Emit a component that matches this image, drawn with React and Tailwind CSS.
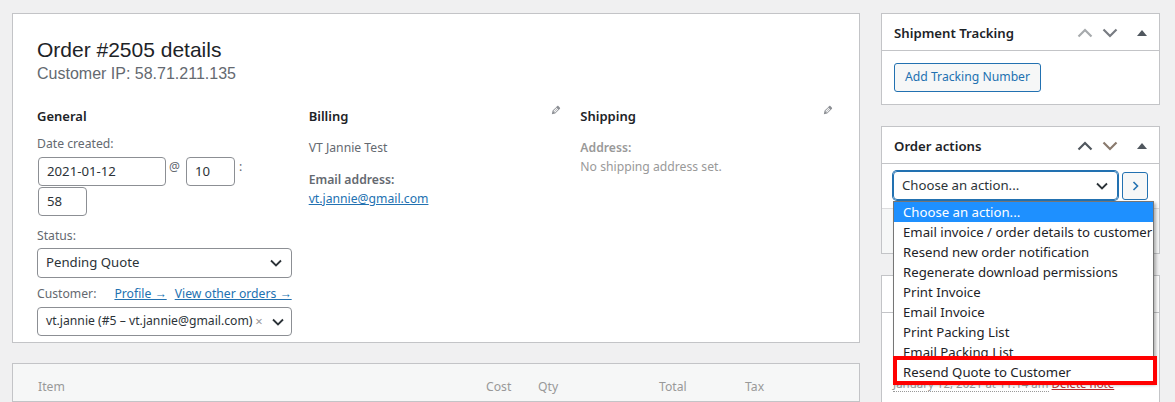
import React from "react";

const ui = { fontFamily: '"Noto Sans", "Open Sans", sans-serif' };
const arial = { fontFamily: '"Liberation Sans", Arial, sans-serif' };

const Pencil = () => (
  <svg width="12" height="12" viewBox="0 0 20 20" fill="#8c8f94">
    <path d="M13.89 3.39l2.71 2.72c.46.46.42 1.24.03 1.64l-8.01 8.02-5.56 1.16 1.16-5.58s7.6-7.63 7.99-8.03c.39-.39 1.22-.39 1.68.07zm-2.730 2.79l-5.59 5.61 1.11 1.11 5.54-5.65zm-2.97 8.23l5.58-5.6-1.07-1.08-5.59 5.6z" />
  </svg>
);

const Chevron = ({ up, color }) => (
  <svg width="16" height="10" viewBox="0 0 16 10" fill="none" stroke={color} strokeWidth="2.2">
    {up ? <path d="M1.5 8.5 8 2l6.5 6.5" /> : <path d="M1.5 1.5 8 8l6.5-6.5" />}
  </svg>
);

const Caret = () => (
  <svg width="12" height="8" viewBox="0 0 12 8" fill="none" stroke="#2c3338" strokeWidth="1.8" className="shrink-0">
    <path d="M1 1.5 6 6.5l5-5" />
  </svg>
);

const Triangle = () => (
  <svg width="10" height="6" viewBox="0 0 10 6" fill="#50575e">
    <path d="M0 6 5 0l5 6z" />
  </svg>
);

const BoxHeader = ({ title, upColor, downColor }) => (
  <div className="h-[37px] flex items-center justify-between pl-[12px] pr-[12px] border-b border-[#c3c4c7]">
    <span className="text-[13.2px] font-semibold text-[#1d2327] pt-[3px]">{title}</span>
    <div className="flex items-center gap-[9px] pt-[1px]">
      <Chevron up color={upColor} />
      <Chevron color={downColor} />
      <span className="ml-[10px] flex"><Triangle /></span>
    </div>
  </div>
);

const Input = ({ value, w }) => (
  <div className={`h-[29px] ${w} border border-[#8c8f94] rounded-[4px] bg-white px-[8px] flex items-center text-[13.2px] text-[#2c3338]`}>
    {value}
  </div>
);

const actions = [
  "Choose an action...",
  "Email invoice / order details to customer",
  "Resend new order notification",
  "Regenerate download permissions",
  "Print Invoice",
  "Email Invoice",
  "Print Packing List",
  "Email Packing List",
  "Resend Quote to Customer",
];

export default function App() {
  return (
    <div className="relative w-[1175px] h-[402px] overflow-hidden bg-[#f0f0f1] flex gap-[21px] pl-[12px] pt-[13px]" style={ui}>
      {/* left column */}
      <div className="w-[848px] flex flex-col gap-[20px] shrink-0">
        <div className="h-[330px] bg-white border border-[#c3c4c7] px-[24px] pt-[23px]">
          <h2 className="text-[21px] leading-[25px] text-[#1d2327]" style={arial}>Order #2505 details</h2>
          <p className="text-[16px] leading-[24px] text-[#646970]" style={arial}>Customer IP: 58.71.211.135</p>

          <div className="flex gap-[17px] mt-[20px]">
            {/* General */}
            <div className="w-[255px]">
              <h3 className="text-[13px] leading-[20px] font-semibold text-[#1d2327]">General</h3>
              <div className="mt-[8px] text-[12.2px] leading-[20px] text-[#646970]">Date created:</div>
              <div className="mt-[3px] flex items-start">
                <Input value="2021-01-12" w="w-[128px] ml-[1px]" />
                <span className="text-[12.2px] text-[#646970] mx-[3px] leading-[20px]">@</span>
                <Input value="10" w="w-[49px] ml-[3px]" />
                <span className="text-[12.2px] text-[#646970] ml-[4px] leading-[20px]">:</span>
              </div>
              <Input value="58" w="w-[49px] ml-[1px] mt-[1px]" />
              <div className="mt-[10px] text-[12.2px] leading-[20px] text-[#646970]">Status:</div>
              <div className="mt-[2px] h-[30px] border border-[#8c8f94] rounded-[4px] flex items-center justify-between pl-[8px] pr-[9px] text-[13.2px] text-[#2c3338]">
                <span>Pending Quote</span>
                <Caret />
              </div>
              <div className="mt-[6px] flex justify-between text-[12.2px] leading-[20px]">
                <span className="text-[#646970]">Customer:</span>
                <span className="flex gap-[8px] text-[#2271b1] underline">
                  <span>Profile →</span>
                  <span>View other orders →</span>
                </span>
              </div>
              <div className="mt-[3px] h-[29px] border border-[#8c8f94] rounded-[4px] flex items-center justify-between pl-[8px] pr-[7px] text-[12.2px] text-[#2c3338] whitespace-nowrap">
                <span>vt.jannie (#5 – vt.jannie@gmail.com)</span>
                <span className="flex items-center gap-[9px]">
                  <span className="text-[#999] text-[13px]">×</span>
                  <Caret />
                </span>
              </div>
            </div>

            {/* Billing */}
            <div className="w-[255px]">
              <div className="flex justify-between items-start">
                <h3 className="text-[13px] leading-[20px] font-semibold text-[#1d2327]">Billing</h3>
                <span className="mt-[-2px] mr-[1px]"><Pencil /></span>
              </div>
              <div className="mt-[12px] text-[12.2px] leading-[20px] text-[#646970]">VT Jannie Test</div>
              <div className="mt-[12px] text-[12.2px] leading-[20px] font-semibold text-[#646970]">Email address:</div>
              <div className="text-[12.2px] leading-[18px] text-[#2271b1] underline">vt.jannie@gmail.com</div>
            </div>

            {/* Shipping */}
            <div className="w-[255px]">
              <div className="flex justify-between items-start">
                <h3 className="text-[13px] leading-[20px] font-semibold text-[#1d2327]">Shipping</h3>
                <span className="mt-[-2px] mr-[1px]"><Pencil /></span>
              </div>
              <div className="mt-[12px] text-[12.2px] leading-[20px] font-semibold text-[#999]">Address:</div>
              <div className="text-[12.2px] leading-[18px] text-[#999]">No shipping address set.</div>
            </div>
          </div>
        </div>

        {/* Items */}
        <div className="flex-1 bg-[#f6f7f7] border border-[#c3c4c7] pl-[25px] pt-[13px] flex text-[12.2px] leading-[20px] text-[#999]">
          <span className="w-[448px]">Item</span>
          <span className="w-[52px]">Cost</span>
          <span className="w-[121px]">Qty</span>
          <span className="w-[86px]">Total</span>
          <span>Tax</span>
        </div>
      </div>

      {/* right column */}
      <div className="w-[279px] flex flex-col gap-[21px] shrink-0">
        <div className="bg-white border border-[#c3c4c7]">
          <BoxHeader title="Shipment Tracking" upColor="#a7aaad" downColor="#787c82" />
          <div className="p-[12px]">
            <div className="inline-flex h-[29px] items-center px-[10px] border border-[#2271b1] rounded-[3px] bg-[#f6f7f7] text-[12.2px] text-[#2271b1]">
              Add Tracking Number
            </div>
          </div>
        </div>

        <div className="bg-white border border-[#c3c4c7]">
          <BoxHeader title="Order actions" upColor="#50575e" downColor="#8a7a6e" />
          <div className="px-[11px] pt-[7px] pb-[8px] flex gap-[4px]">
            <div className="w-[225px] h-[29px] border border-[#2271b1] shadow-[0_0_0_1px_#2271b1] rounded-[4px] flex items-center justify-between pl-[8px] pr-[9px] text-[13.2px] text-[#2c3338]">
              <span>Choose an action...</span>
              <Caret />
            </div>
            <div className="w-[26px] h-[28px] mt-[1px] border border-[#2271b1] rounded-[3px] bg-[#f6f7f7] flex items-center justify-center">
              <svg width="7" height="10" viewBox="0 0 7 10" fill="none" stroke="#2271b1" strokeWidth="1.6">
                <path d="M1.5 1 5.5 5l-4 4" />
              </svg>
            </div>
          </div>
          <div className="h-[45px] bg-[#f6f7f7] border-t border-[#dcdcde] pl-[11px] pt-[12px] text-[12.2px] leading-[20px] text-[#b32d2e] underline">
            Move to trash
          </div>
        </div>

        <div className="flex-1 bg-white border border-[#c3c4c7] border-b-0">
          <BoxHeader title="Order notes" upColor="#50575e" downColor="#787c82" />
          <div className="px-[11px] pt-[12px]">
            <div className="h-[48px] bg-[#efefef]" />
            <div className="mt-[2px] text-[11.5px] leading-[18px] text-[#999]">
              <span className="border-b border-dotted border-[#999]">January 12, 2021 at 11:14 am</span>{" "}
              <span className="text-[#b32d2e] underline">Delete note</span>
            </div>
          </div>
        </div>
      </div>

      {/* open select list */}
      <div className="absolute left-[893px] top-[201px] w-[261px] bg-white border border-[#767676] shadow-[2px_2px_3px_rgba(0,0,0,0.3)] text-[13.2px] leading-[20px] text-[#1d2327]">
        {actions.map((a, i) => (
          <div key={a} className={`h-[20px] pl-[9px] whitespace-nowrap ${i === 0 ? "bg-[#1e90ff] text-white" : ""}`}>
            {a}
          </div>
        ))}
      </div>

      {/* highlight box */}
      <div className="absolute left-[893px] top-[356px] w-[264px] h-[29px] border-[4px] border-[#ff0000]" />
    </div>
  );
}
